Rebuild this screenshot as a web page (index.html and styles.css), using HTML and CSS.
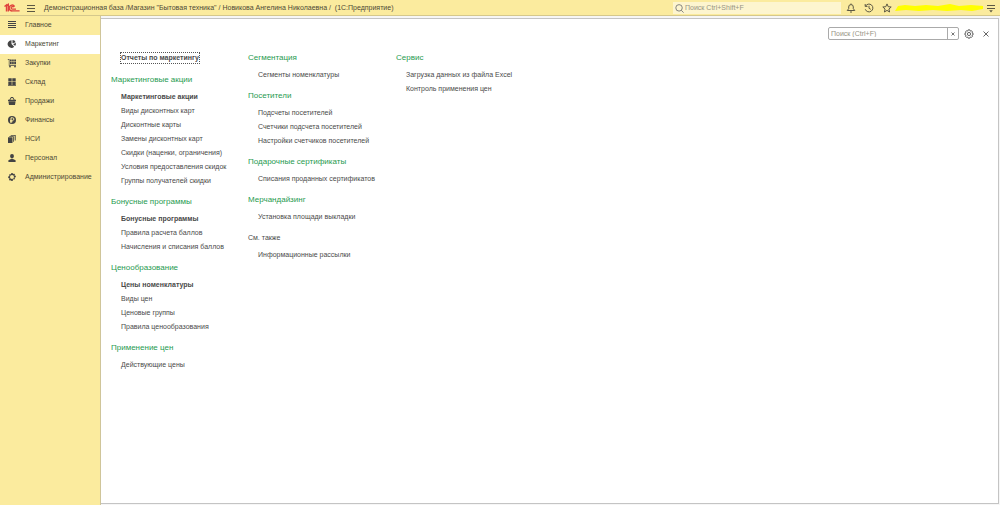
FILE: index.html
```html
<!DOCTYPE html>
<html lang="ru">
<head>
<meta charset="utf-8">
<title>Демонстрационная база</title>
<link rel="stylesheet" href="styles.css">
</head>
<body>
<header class="topbar">
  <svg class="logo" viewBox="0 0 16 10" fill="none" stroke="#e0433c" stroke-width="1.4"><path d="M.5 3.5 2.5 2V8.5M4.3 8.5V1.4L2 3.2M10.6 3.6A2.9 2.9 0 1 0 8.4 7.9H15.6M9.6 4.2A1.3 1.3 0 1 0 8.4 6.1H12"/></svg>
  <button class="icon-btn menu-btn" aria-label="Меню"><svg viewBox="0 0 10 10"><path d="M1 2.5h8M1 5.5h8M1 8.5h8"/></svg></button>
  <h1 class="title">Демонстрационная база /Магазин "Бытовая техника" / Новикова Ангелина Николаевна /&nbsp; (1С:Предприятие)</h1>
  <label class="global-search">
    <svg viewBox="0 0 10 10"><circle cx="4.5" cy="4.3" r="3.6"/><path d="m7 7 2.5 2.6"/></svg>
    <input type="text" placeholder="Поиск Ctrl+Shift+F" aria-label="Глобальный поиск">
  </label>
  <div class="tools">
    <button class="icon-btn" aria-label="Уведомления"><svg viewBox="0 0 10 10"><path d="M1.2 7.5h7.6L7.3 5.7V4A2.3 2.3 0 0 0 5 1.6 2.3 2.3 0 0 0 2.7 4v1.7zM5 .5v1M4 9h2"/></svg></button>
    <button class="icon-btn" aria-label="История"><svg viewBox="0 0 10 10"><path d="M1.5 3.2A3.9 3.9 0 1 1 1.3 6.3M1.2 1v2.4h2.3M5 2.8v2.5l1.8 1"/></svg></button>
    <button class="icon-btn" aria-label="Избранное"><svg viewBox="0 0 10 10"><path d="m5 .9 1.2 2.8 3 .3-2.3 2 .7 3L5 7.4 2.4 9l.7-3L.8 4l3-.3z"/></svg></button>
  </div>
  <svg class="marker" viewBox="0 0 90 8" preserveAspectRatio="none"><path fill="#ffff00" d="M3 2 10 1 20 2 31 1 43 2 55 0 64 2 76 1 88 2V5L77 7 66 6 52 7 38 6 24 7 11 6 0 7z"/></svg>
  <button class="icon-btn settings-btn" aria-label="Сервис и настройки"><svg viewBox="0 0 10 10"><path d="M1 2.5h8M1 5.5h8"/><path class="solid" d="M3.2 7.2h3.6L5 9.4z"/></svg></button>
</header>
<div class="workspace">
  <nav class="sidebar">
    <a class="section" href="#"><svg viewBox="0 0 10 10"><path d="M1 1h8v1H1zM1 3h8v1H1zM1 5h8v1H1zM1 7h8v1H1z"/></svg>Главное</a>
    <a class="section active" href="#"><svg viewBox="0 0 10 10"><path d="M4.5 1.3V5l2.7 2.7A3.8 3.8 0 1 1 4.5 1.3z"/><path d="M5.5 1v3.2l3.2-1A3.6 3.6 0 0 0 5.5 1zM6 5l3-.9a3.8 3.8 0 0 1-.9 3z"/></svg>Маркетинг</a>
    <a class="section" href="#"><svg viewBox="0 0 10 10"><path d="M.8 1h1.7v6H9v.8H1.8v-6h-1zM3 1.5h1.7v2H3zM5.1 1.5h1.7v2H5.1zM7.2 1.5H9v2H7.2zM3 3.9h1.7v2.3H3zM5.1 3.9h1.7v2.3H5.1zM7.2 3.9H9v2.3H7.2z"/><circle cx="3" cy="8.6" r=".9"/><circle cx="8" cy="8.6" r=".9"/></svg>Закупки</a>
    <a class="section" href="#"><svg viewBox="0 0 10 10"><path d="M1.3 1.3h3.4v3.1H1.3zM5.3 1.3h3.4v3.1H5.3zM1.3 5h3.4v2.9H1.3zM5.3 5h3.4v2.9H5.3zM1 8.2h8V9H1z"/></svg>Склад</a>
    <a class="section" href="#"><svg viewBox="0 0 10 10"><path fill-rule="evenodd" d="M1 3.8h1.3L4 1h2l1.7 2.8H9v1.1H1zM3.3 3.8h3.4L5.5 1.9h-1zM1.4 5.3h7.2L8 9H2z"/></svg>Продажи</a>
    <a class="section" href="#"><svg viewBox="0 0 10 10"><circle cx="5" cy="5" r="4"/><path class="cut" d="M4 8V2.8h1.6a1.3 1.3 0 0 1 0 2.6H3M3 6.7h2.5"/></svg>Финансы</a>
    <a class="section" href="#"><svg viewBox="0 0 10 10"><path d="M1 3.3h4.5V9H1z"/><path d="M2.3 2.2h4.5v5.6H6V2.9H2.3zM3.7 1h5v5.6h-1V1.8h-4z"/></svg>НСИ</a>
    <a class="section" href="#"><svg viewBox="0 0 10 10"><path d="M5 1a1.9 1.9 0 0 1 1.9 2C6.9 4.4 6 5.4 5 5.4S3.1 4.4 3.1 3A1.9 1.9 0 0 1 5 1zM1.4 9V7.2L4 6h2l2.6 1.2V9z"/></svg>Персонал</a>
    <a class="section" href="#"><svg viewBox="0 0 10 10"><path fill-rule="evenodd" d="M4.3 1h1.4l.3 1.2 1-.8 1 1-.6 1 1.4.3v1.5l-1.4.3.6 1.2-1 1-1-.6L5.7 9H4.3L4 7.9l-1 .8-1-1 .6-1.2L1.2 6V4.4l1.4-.3L2 3l1-1 1 .5zM5 3.1a2 2 0 1 0 0 4 2 2 0 0 0 0-4z"/></svg>Администрирование</a>
  </nav>
  <main class="content">
    <div class="panel">
      <div class="panel-tools">
        <div class="local-search">
          <input type="text" placeholder="Поиск (Ctrl+F)" aria-label="Поиск">
          <button aria-label="Очистить"><svg viewBox="0 0 10 10"><path d="m3.5 3.5 3 3M6.5 3.5l-3 3"/></svg></button>
        </div>
        <button class="icon-btn" aria-label="Настройка"><svg viewBox="0 0 10 10"><path d="M4.2.8h1.6l.4 1.3 1.3-.4 1.1 1.4L7.9 4l1.3.5v1.1l-1.3.5.7 1-1.1 1.3-1.3-.4-.4 1.2H4.2L3.8 8l-1.3.4-1.1-1.3.7-1L.8 5.6V4.5L2.1 4l-.7-.9 1.1-1.4 1.3.4z"/><circle cx="5" cy="5" r="1.6"/></svg></button>
        <button class="icon-btn" aria-label="Закрыть"><svg viewBox="0 0 10 10"><path d="m2.5 2.5 5 5M7.5 2.5l-5 5"/></svg></button>
      </div>
      <div class="columns">
        <div class="column">
          <a class="report" href="#">Отчеты по маркетингу</a>
          <section class="group">
            <h2>Маркетинговые акции</h2>
            <a class="main-link" href="#">Маркетинговые акции</a>
            <a href="#">Виды дисконтных карт</a>
            <a href="#">Дисконтные карты</a>
            <a href="#">Замены дисконтных карт</a>
            <a href="#">Скидки (наценки, ограничения)</a>
            <a href="#">Условия предоставления скидок</a>
            <a href="#">Группы получателей скидки</a>
          </section>
          <section class="group">
            <h2>Бонусные программы</h2>
            <a class="main-link" href="#">Бонусные программы</a>
            <a href="#">Правила расчета баллов</a>
            <a href="#">Начисления и списания баллов</a>
          </section>
          <section class="group">
            <h2>Ценообразование</h2>
            <a class="main-link" href="#">Цены номенклатуры</a>
            <a href="#">Виды цен</a>
            <a href="#">Ценовые группы</a>
            <a href="#">Правила ценообразования</a>
          </section>
          <section class="group">
            <h2>Применение цен</h2>
            <a href="#">Действующие цены</a>
          </section>
        </div>
        <div class="column">
          <section class="group">
            <h2>Сегментация</h2>
            <a href="#">Сегменты номенклатуры</a>
          </section>
          <section class="group">
            <h2>Посетители</h2>
            <a href="#">Подсчеты посетителей</a>
            <a href="#">Счетчики подсчета посетителей</a>
            <a href="#">Настройки счетчиков посетителей</a>
          </section>
          <section class="group">
            <h2>Подарочные сертификаты</h2>
            <a href="#">Списания проданных сертификатов</a>
          </section>
          <section class="group">
            <h2>Мерчандайзинг</h2>
            <a href="#">Установка площади выкладки</a>
          </section>
          <section class="group see-also">
            <h2>См. также</h2>
            <a href="#">Информационные рассылки</a>
          </section>
        </div>
        <div class="column">
          <section class="group">
            <h2>Сервис</h2>
            <a href="#">Загрузка данных из файла Excel</a>
            <a href="#">Контроль применения цен</a>
          </section>
        </div>
      </div>
    </div>
  </main>
</div>
</body>
</html>
```
FILE: styles.css
```css
* { box-sizing: border-box; }
body {
  margin: 0;
  min-height: 100vh;
  display: flex;
  flex-direction: column;
  background: #fff;
  color: #4a4a4a;
  font: 7px/14px "Liberation Sans", Arial, sans-serif;
}
a { color: inherit; text-decoration: none; }
h1, h2 { margin: 0; font-size: inherit; font-weight: normal; }
svg { display: block; }
button { padding: 0; border: 0; background: none; color: inherit; }
input { min-width: 0; padding: 0; border: 0; outline: 0; background: none; font: inherit; color: inherit; }
input::placeholder { color: #979484; opacity: 1; }

.topbar {
  display: flex;
  align-items: center;
  height: 16px;
  padding: 1px 4px 0;
  background: #fbeb9e;
  border-bottom: 1px solid #d5c88c;
}
.logo { width: 16px; height: 10px; }
.icon-btn svg {
  width: 10px;
  height: 10px;
  fill: none;
  stroke: #5c5844;
  stroke-width: 1;
}
.icon-btn .solid { fill: #5c5844; stroke: none; }
.menu-btn { margin-left: 6px; }
.title { flex: 1; margin-left: 8px; white-space: nowrap; color: #4d4936; }
.global-search {
  display: flex;
  align-items: center;
  gap: 1px;
  width: 168px;
  height: 12px;
  padding-left: 2px;
  background: #fdf5cf;
}
.global-search svg { width: 9px; height: 9px; fill: none; stroke: #777; stroke-width: 1; }
.global-search input { flex: 1; }
.tools { display: flex; gap: 8px; margin-left: 5px; }
.marker { width: 90px; height: 8px; margin: 0 1px 0 3px; }

.workspace { flex: 1; display: flex; }
.sidebar {
  width: 101px;
  background: #fbeb9e;
  border-right: 1px solid #cfc59a;
}
.section {
  display: flex;
  align-items: center;
  gap: 8px;
  height: 19px;
  padding: 0 0 1px 7px;
  color: #4d4936;
}
.section.active { background: #fff; }
.section svg { width: 10px; height: 10px; fill: #444; }
.section .cut { fill: none; stroke: #fbeb9e; stroke-width: 1; }
.content { flex: 1; display: flex; padding: 2px 1px 1px 0; background: #f6f6f6; }
.panel { flex: 1; background: #fff; border: 1px solid #c4c4c4; border-left: 0; }

.panel-tools {
  display: flex;
  justify-content: flex-end;
  align-items: center;
  gap: 7px;
  padding: 8px 7px 0 0;
}
.panel-tools .icon-btn svg { stroke: #666; }
.local-search {
  display: flex;
  width: 131px;
  height: 13px;
  margin-right: -2px;
  border: 1px solid #aaa;
  border-radius: 2px;
}
.local-search input { flex: 1; padding-left: 2px; }
.local-search button { width: 11px; border-left: 1px solid #aaa; }
.local-search button svg { width: 10px; height: 10px; fill: none; stroke: #777; stroke-width: 1; }

.columns { display: flex; padding: 10px 0 0 10px; }
.column { width: 148px; }
.column:first-child { width: 137px; }
.group { margin-bottom: 6px; }
.group h2 { margin-bottom: 2px; line-height: 16px; font-size: 8px; color: #1f9a50; }
.group a { display: block; width: max-content; margin-left: 10px; }
.group .main-link { font-weight: bold; }
.group.see-also h2 { font-size: 7px; color: inherit; }
.report {
  display: block;
  width: max-content;
  margin: 2px 0 8px 9px;
  border: 1px dotted #555;
  line-height: 10px;
  font-weight: bold;
}
```
